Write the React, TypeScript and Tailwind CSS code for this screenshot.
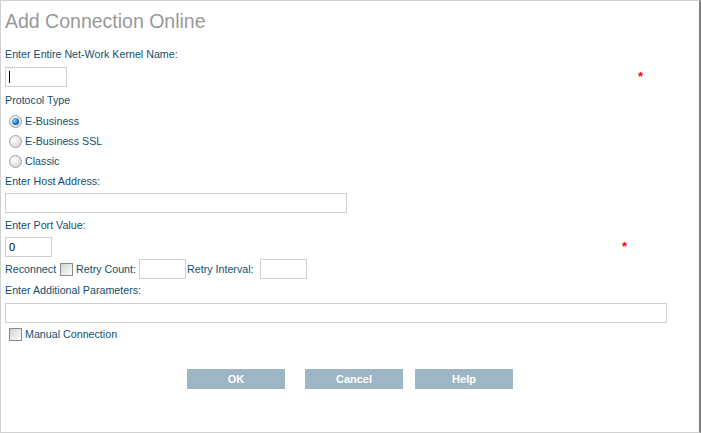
import React from "react";

const font = { fontFamily: '"Liberation Sans", Arial, sans-serif' };

function Radio({ checked }: { checked?: boolean }) {
  return (
    <span className="relative flex h-[13px] w-[13px] shrink-0 items-center justify-center rounded-full border border-[#a0a0a0] bg-[radial-gradient(circle_at_35%_35%,#ffffff,#cfcfcf)]">
      {checked && (
        <span className="h-[7px] w-[7px] rounded-full bg-[radial-gradient(circle_at_35%_35%,#8fd0ff,#0d5fa8_70%)]" />
      )}
    </span>
  );
}

function Checkbox() {
  return (
    <span className="block h-[13px] w-[13px] shrink-0 border border-[#8a8a8a] bg-gradient-to-br from-[#d2d2d2] to-white" />
  );
}

function Field({ w, children }: { w: string; children?: React.ReactNode }) {
  return (
    <div className={`flex h-[20px] items-center border border-[#cfcfcf] bg-white px-[3px] text-[11px] text-black ${w}`}>
      {children}
    </div>
  );
}

const label = "flex h-[20px] items-center text-[10.7px] text-[#134f6e]";
const btn = "flex h-[20px] w-[98px] items-center justify-center bg-[#9eb5c4] text-[11px] font-bold text-white";

export default function App() {
  return (
    <div style={font} className="h-[433px] w-[701px] border-t border-b border-l border-r-2 border-[#d0d0d0] border-r-[#808080] bg-white pl-[4px]">
      <div className="mt-[9px] flex h-[24px] items-center text-[19.5px] text-[#999999]">Add Connection Online</div>

      <div className={`${label} mt-[10px]`}>Enter Entire Net-Work Kernel Name:</div>
      <div className="mt-[3px] flex w-[638px] items-start justify-between">
        <Field w="w-[62px]">
          <span className="block h-[12px] w-[1px] bg-black" />
        </Field>
        <span className="mt-[3px] text-[13px] font-bold leading-[13px] text-[#ff0000]">*</span>
      </div>

      <div className={`${label} mt-[3px]`}>Protocol Type</div>
      <div className="mt-[1px] pl-[4px]">
        {[
          ["E-Business", true],
          ["E-Business SSL", false],
          ["Classic", false],
        ].map(([t, c]) => (
          <div key={t as string} className={`${label} gap-[3px]`}>
            <Radio checked={c as boolean} />
            <span>{t as string}</span>
          </div>
        ))}
      </div>

      <div className={label}>Enter Host Address:</div>
      <div className="mt-[2px]">
        <Field w="w-[342px]" />
      </div>

      <div className={`${label} mt-[2px]`}>Enter Port Value:</div>
      <div className="mt-[2px] flex w-[622px] items-start justify-between">
        <Field w="w-[47px]">0</Field>
        <span className="mt-[3px] text-[13px] font-bold leading-[13px] text-[#ff0000]">*</span>
      </div>

      <div className={`${label} mt-[2px]`}>
        <span className="w-[55px]">Reconnect</span>
        <Checkbox />
        <span className="ml-[3px] w-[63px]">Retry Count:</span>
        <Field w="w-[47px]" />
        <span className="ml-[1px] w-[73px]">Retry Interval:</span>
        <Field w="w-[47px]" />
      </div>

      <div className={`${label} mt-[1px]`}>Enter Additional Parameters:</div>
      <div className="mt-[3px]">
        <Field w="w-[662px]" />
      </div>

      <div className={`${label} mt-[1px] gap-[3px] pl-[4px]`}>
        <Checkbox />
        <span>Manual Connection</span>
      </div>

      <div className="mt-[25px] flex pl-[182px]">
        <button className={btn}>OK</button>
        <button className={`${btn} ml-[20px]`}>Cancel</button>
        <button className={`${btn} ml-[12px]`}>Help</button>
      </div>
    </div>
  );
}
